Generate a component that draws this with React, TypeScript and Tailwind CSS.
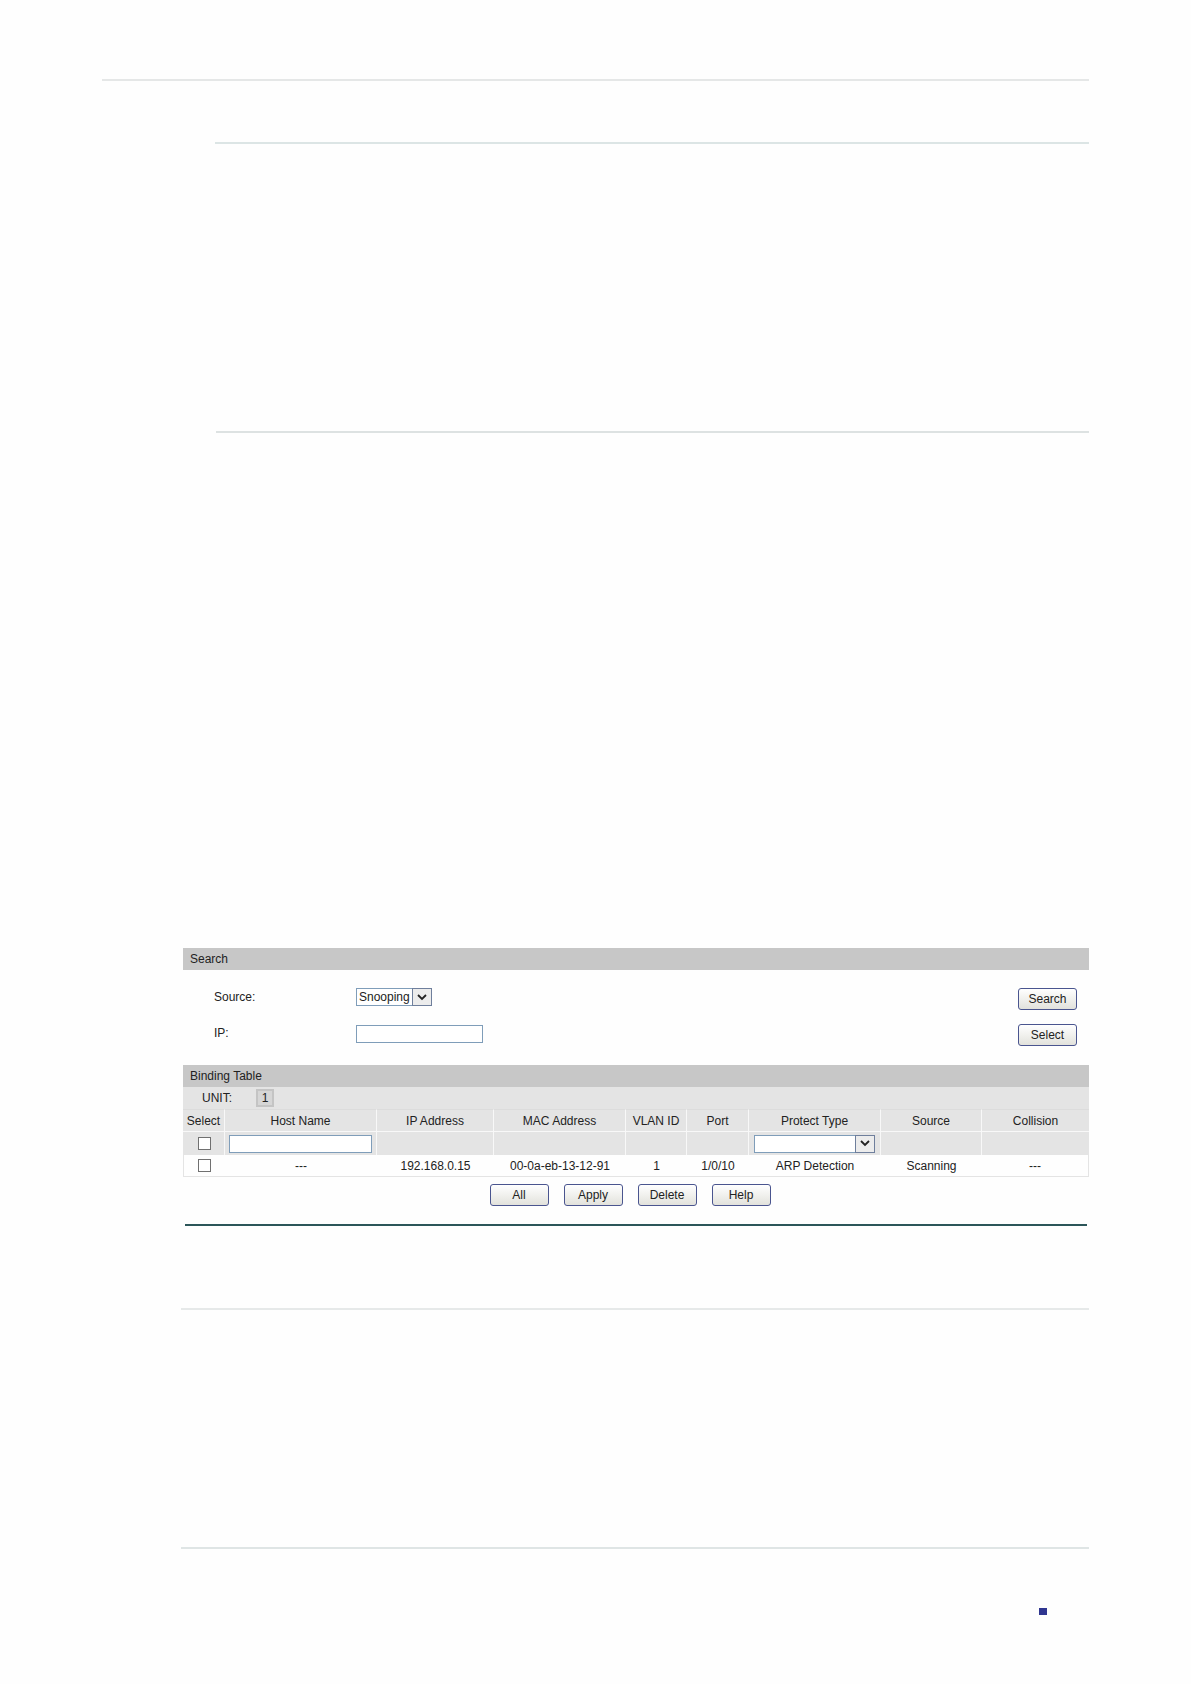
import { useState } from 'react';
import type { ReactNode } from 'react';

interface Binding {
  host: string;
  ip: string;
  mac: string;
  vlan: string;
  port: string;
  protect: string;
  source: string;
  collision: string;
}

const BINDINGS: Binding[] = [
  {
    host: '---',
    ip: '192.168.0.15',
    mac: '00-0a-eb-13-12-91',
    vlan: '1',
    port: '1/0/10',
    protect: 'ARP Detection',
    source: 'Scanning',
    collision: '---',
  },
];

const COLUMNS = [
  { title: 'Select', width: 'w-[42px]' },
  { title: 'Host Name', width: 'w-[152px]' },
  { title: 'IP Address', width: 'w-[117px]' },
  { title: 'MAC Address', width: 'w-[132px]' },
  { title: 'VLAN ID', width: 'w-[61px]' },
  { title: 'Port', width: 'w-[62px]' },
  { title: 'Protect Type', width: 'w-[132px]' },
  { title: 'Source', width: 'w-[101px]' },
  { title: 'Collision', width: '' },
];

function App() {
  return (
    <div className="bg-[#fefefe] pt-[79px] pr-[102px] pb-[69px] pl-[102px] font-['Liberation_Sans',Arial,sans-serif] text-xs text-[#222]">
      <hr className="border-t-2 border-[#e5e7e7]" />
      <hr className="mt-[61px] ml-[113px] border-t-2 border-[#dce5e5]" />
      <hr className="mt-[287px] ml-[114px] border-t-2 border-[#dde2e2]" />

      <main className="mt-[515px] ml-[81px]">
        <SearchPanel />
        <BindingTable />
        <hr className="mt-[18px] mr-0.5 ml-0.5 border-t-2 border-[#2c5659]" />
      </main>

      <hr className="mt-[82px] ml-[79px] border-t-2 border-[#e6e9e9]" />
      <hr className="mt-[237px] ml-[79px] border-t-2 border-[#dfe5e5]" />

      <footer className="mt-[59px] mr-[42px] flex justify-end">
        <span className="h-[7px] w-2 bg-[#2f3690]" />
      </footer>
    </div>
  );
}

function SearchPanel() {
  const [source, setSource] = useState('Snooping');

  return (
    <section>
      <PanelTitle>Search</PanelTitle>
      <form className="space-y-3.5 pt-[18px] pr-3 pb-[19px] pl-[31px]" onSubmit={(e) => e.preventDefault()}>
        <div className="flex h-[22px] items-start">
          <label htmlFor="source" className="w-[142px] leading-[19px]">Source:</label>
          <DropDown id="source" width="w-[76px]" value={source} onChange={setSource} options={['Snooping', 'Scanning', 'Manual', 'All']} />
          <div className="ml-auto">
            <PushButton>Search</PushButton>
          </div>
        </div>
        <div className="flex h-[22px] items-start">
          <label htmlFor="ip" className="w-[142px] leading-[19px]">IP:</label>
          <input id="ip" type="text" className="mt-px h-[18px] w-[127px] border border-[#7f9db9] bg-white px-1" />
          <div className="ml-auto">
            <PushButton>Select</PushButton>
          </div>
        </div>
      </form>
    </section>
  );
}

function BindingTable() {
  const [protect, setProtect] = useState('');

  return (
    <section>
      <PanelTitle>Binding Table</PanelTitle>
      <div className="flex h-[22px] items-center bg-[#e4e4e4] pl-[19px]">
        <span className="w-[54px]">UNIT:</span>
        <button type="button" className="h-[18px] w-[18px] border-2 border-[#c4c4c4] bg-[#d6d6d6] leading-[13px]">1</button>
      </div>

      <table className="w-full table-fixed border-separate border-spacing-0 text-center">
        <thead>
          <tr className="h-[23px] bg-[#e4e4e4]">
            {COLUMNS.map((col) => (
              <th
                key={col.title}
                scope="col"
                className={`${col.width} border-t border-r border-b border-t-[#dcdcdc] border-r-[#f8f8f8] border-b-[#f8f8f8] p-0 font-normal last:border-r-0`}
              >
                {col.title}
              </th>
            ))}
          </tr>
        </thead>
        <tbody>
          {/* Edit row: values applied to the ticked entries */}
          <tr className="h-[23px] bg-[#e4e4e4] *:border-r *:border-[#f8f8f8] *:p-0 *:first:border-l *:first:border-l-[#e4e4e4] *:last:border-r-0">
            <td><Tick label="Select all entries" /></td>
            <td>
              <input type="text" aria-label="Host Name" className="mx-auto block h-[18px] w-[143px] border border-[#7f9db9] bg-white px-1" />
            </td>
            <td />
            <td />
            <td />
            <td />
            <td>
              <div className="flex justify-center">
                <DropDown label="Protect Type" width="w-[121px]" value={protect} onChange={setProtect} options={['', 'None', 'ARP Detection']} />
              </div>
            </td>
            <td />
            <td />
          </tr>
          {BINDINGS.map((row) => (
            <tr key={row.mac} className="h-[22px] *:border-b *:border-[#e4e4e4] *:p-0 *:first:border-l *:last:border-r">
              <td><Tick label={`Select ${row.ip}`} /></td>
              <td>{row.host}</td>
              <td>{row.ip}</td>
              <td>{row.mac}</td>
              <td>{row.vlan}</td>
              <td>{row.port}</td>
              <td>{row.protect}</td>
              <td>{row.source}</td>
              <td>{row.collision}</td>
            </tr>
          ))}
        </tbody>
      </table>

      <div className="mt-[7px] mr-3 flex justify-center gap-[15px]">
        <PushButton>All</PushButton>
        <PushButton>Apply</PushButton>
        <PushButton>Delete</PushButton>
        <PushButton>Help</PushButton>
      </div>
    </section>
  );
}

function PanelTitle({ children }: { children: ReactNode }) {
  return <h2 className="h-[22px] bg-[#c7c7c7] pl-[7px] leading-[22px]">{children}</h2>;
}

function PushButton({ children }: { children: ReactNode }) {
  return (
    <button
      type="button"
      className="block h-[22px] w-[59px] rounded-[3px] border border-[#4a558f] bg-linear-to-b from-white to-[#e2e2dc] leading-5"
    >
      {children}
    </button>
  );
}

function Tick({ label }: { label: string }) {
  return (
    <input
      type="checkbox"
      aria-label={label}
      className="mx-auto block size-[13px] appearance-none border border-[#707070] bg-white checked:bg-[#4a558f]"
    />
  );
}

interface DropDownProps {
  id?: string;
  label?: string;
  width: string;
  value: string;
  options: string[];
  onChange: (value: string) => void;
}

function DropDown({ id, label, width, value, options, onChange }: DropDownProps) {
  return (
    <div className={`relative h-[18px] ${width}`}>
      <select
        id={id}
        aria-label={label}
        value={value}
        onChange={(e) => onChange(e.target.value)}
        className="block h-full w-full appearance-none border border-[#7f9db9] bg-white pl-0.5 leading-4"
      >
        {options.map((option) => (
          <option key={option}>{option}</option>
        ))}
      </select>
      <span className="pointer-events-none absolute inset-y-0 right-0 flex w-5 items-center justify-center border border-[#6f7f9c] bg-[#ececec]">
        <svg viewBox="0 0 10 7" className="h-[7px] w-2.5" fill="none" stroke="#222" strokeWidth="1.8">
          <path d="M1 1l4 4 4-4" />
        </svg>
      </span>
    </div>
  );
}

export default App;
